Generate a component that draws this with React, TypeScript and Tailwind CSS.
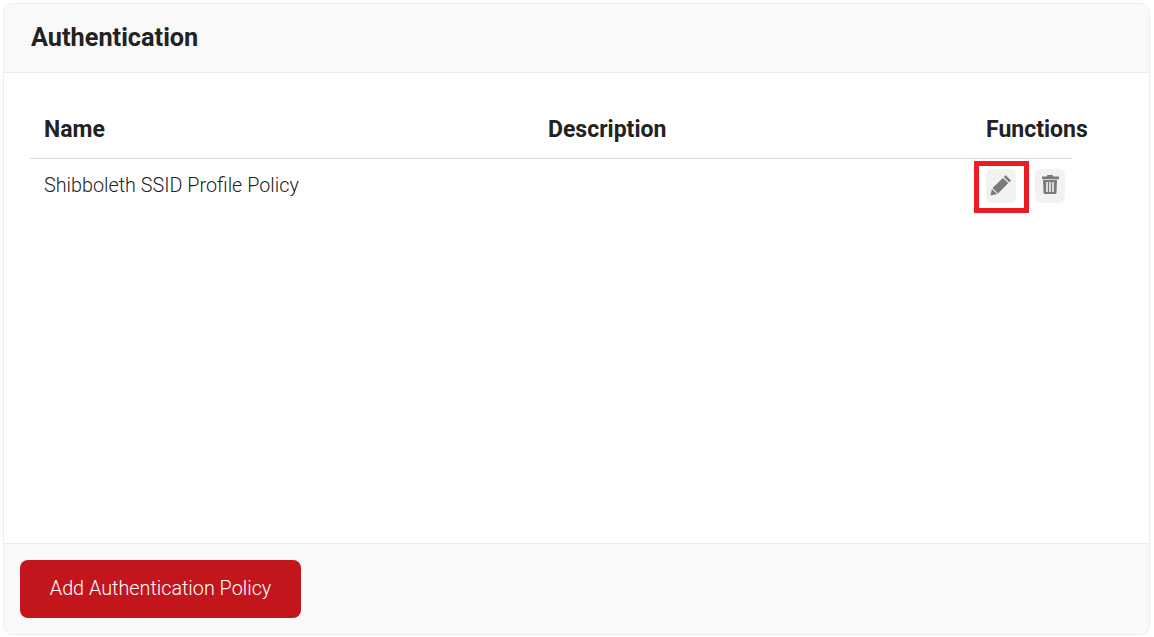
export default function App() {
  return (
    <div className="w-[1154px] h-[637px] bg-white pt-[3px] pl-[3px] font-['Roboto',sans-serif] text-[#222222]">
      <div className="w-[1147px] h-[632px] flex flex-col border border-[#ececec] rounded-[10px] overflow-hidden">
        <div className="h-[69px] shrink-0 flex items-center pl-[27px] pr-[26px] bg-[#f9f9f9] border-b border-[#ececec]">
          <h2 className="text-[25.3px] font-bold leading-none">Authentication</h2>
        </div>

        <div className="flex-1 px-[26px] pt-[30px]">
          <div className="w-[1042px]">
            <div className="grid grid-cols-[504px_438px_100px] h-[56px] items-center border-b border-[#d9d9d9] text-[23px] font-bold">
              <div className="pl-[14px]">Name</div>
              <div className="pl-[14px]">Description</div>
              <div className="pl-[14px] whitespace-nowrap">Functions</div>
            </div>
            <div className="grid grid-cols-[504px_438px_100px] pt-[10px]">
              <div className="pl-[14px] text-[19.8px] font-light leading-[34px]">Shibboleth SSID Profile Policy</div>
              <div />
              <div className="relative flex gap-[19px] pl-[14px]">
                <button className="w-[30px] h-[34px] flex items-center justify-center rounded-[6px] bg-[#f2f2f2]">
                  <svg viewBox="0 0 22 22" className="w-[22px] h-[22px]" fill="#7a7a7a">
                    <path d="M15.6 0.2 21 5.4 19.2 7.2 13.8 2Z" />
                    <path d="M12.9 2.9 18.3 8.1 8 18.4 2.6 13Z" />
                    <path d="M1.9 13.9 7.2 19.1 0.5 20.5Z" />
                  </svg>
                </button>
                <button className="w-[30px] h-[34px] flex items-center justify-center rounded-[6px] bg-[#f2f2f2]">
                  <svg viewBox="0 0 18 22" className="w-[18px] h-[22px]" fill="#7a7a7a">
                    <path d="M6.5 0h5l1 1.4H18v2.8H1V1.4h4.5Z" />
                    <path fillRule="evenodd" d="M2 5h14l-.5 12.8a1.4 1.4 0 0 1-1.4 1.2H3.9a1.4 1.4 0 0 1-1.4-1.2ZM5.2 7v10h1.6V7ZM8.2 7v10h1.6V7ZM11.2 7v10h1.6V7Z" />
                  </svg>
                </button>
                <div className="absolute left-[2px] top-[-8px] w-[55px] h-[52px] border-[5px] border-[#ed1c24]" />
              </div>
            </div>
          </div>
        </div>

        <div className="h-[91px] shrink-0 px-[16px] pt-[16px] bg-[#f9f9f9] border-t border-[#ececec]">
          <button className="w-[281px] h-[58px] rounded-[8px] bg-[#c3161c] text-white text-[19.8px] font-light">
            Add Authentication Policy
          </button>
        </div>
      </div>
    </div>
  );
}
